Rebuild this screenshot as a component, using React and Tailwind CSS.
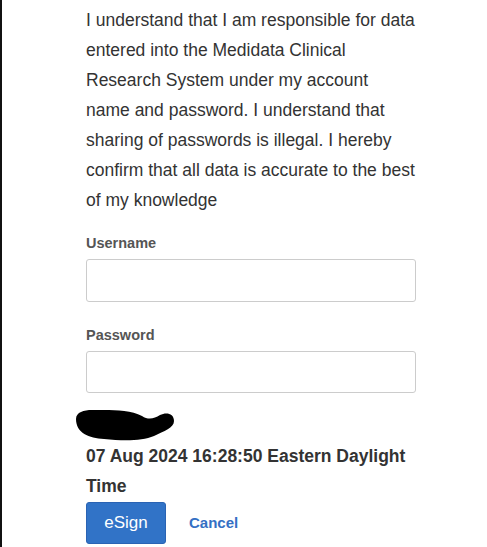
export default function App() {
  return (
    <div className="w-[487px] h-[547px] bg-white border-l-2 border-[#111] overflow-hidden" style={{ fontFamily: '"Liberation Sans", Arial, sans-serif' }}>
      <div className="pl-[84px] pt-[5px] w-[416px]">
        <p className="w-[329px] text-[17.5px] leading-[30px] text-[#333]">
          I understand that I am responsible for data entered into the Medidata Clinical Research System under my account name and password. I understand that sharing of passwords is illegal. I hereby confirm that all data is accurate to the best of my knowledge
        </p>
        <div className="mt-[18px] text-[14.5px] leading-[20px] font-bold text-[#555]">Username</div>
        <div className="mt-[6px] h-[43px] w-[330px] border border-[#ccc] rounded-[3px]"></div>
        <div className="mt-[23px] text-[14.5px] leading-[20px] font-bold text-[#555]">Password</div>
        <div className="mt-[6px] h-[42px] w-[330px] border border-[#ccc] rounded-[3px]"></div>
        <div className="h-[48px] relative">
          <svg className="absolute left-[-12px] top-0" width="110" height="48" viewBox="0 0 110 48">
            <path d="M2 26 C 2 19, 10 17, 18 17 C 35 17, 55 16, 68 23 C 74 27, 80 26, 86 22 C 92 19, 100 20, 100 28 C 100 35, 90 38, 80 43 C 68 48, 50 48, 30 46 C 15 45, 2 40, 2 26 Z" fill="#000" />
          </svg>
        </div>
        <div className="text-[17.5px] leading-[30px] font-bold text-[#333]">
          07 Aug 2024 16:28:50 Eastern Daylight Time
        </div>
        <div className="flex items-center gap-[23px] mt-[1px]">
          <button className="w-[80px] h-[42px] bg-[#3173c7] border border-[#2a63b3] rounded-[3px] text-white text-[17px]">eSign</button>
          <span className="text-[15px] font-bold text-[#3470c4]">Cancel</span>
        </div>
      </div>
    </div>
  );
}
